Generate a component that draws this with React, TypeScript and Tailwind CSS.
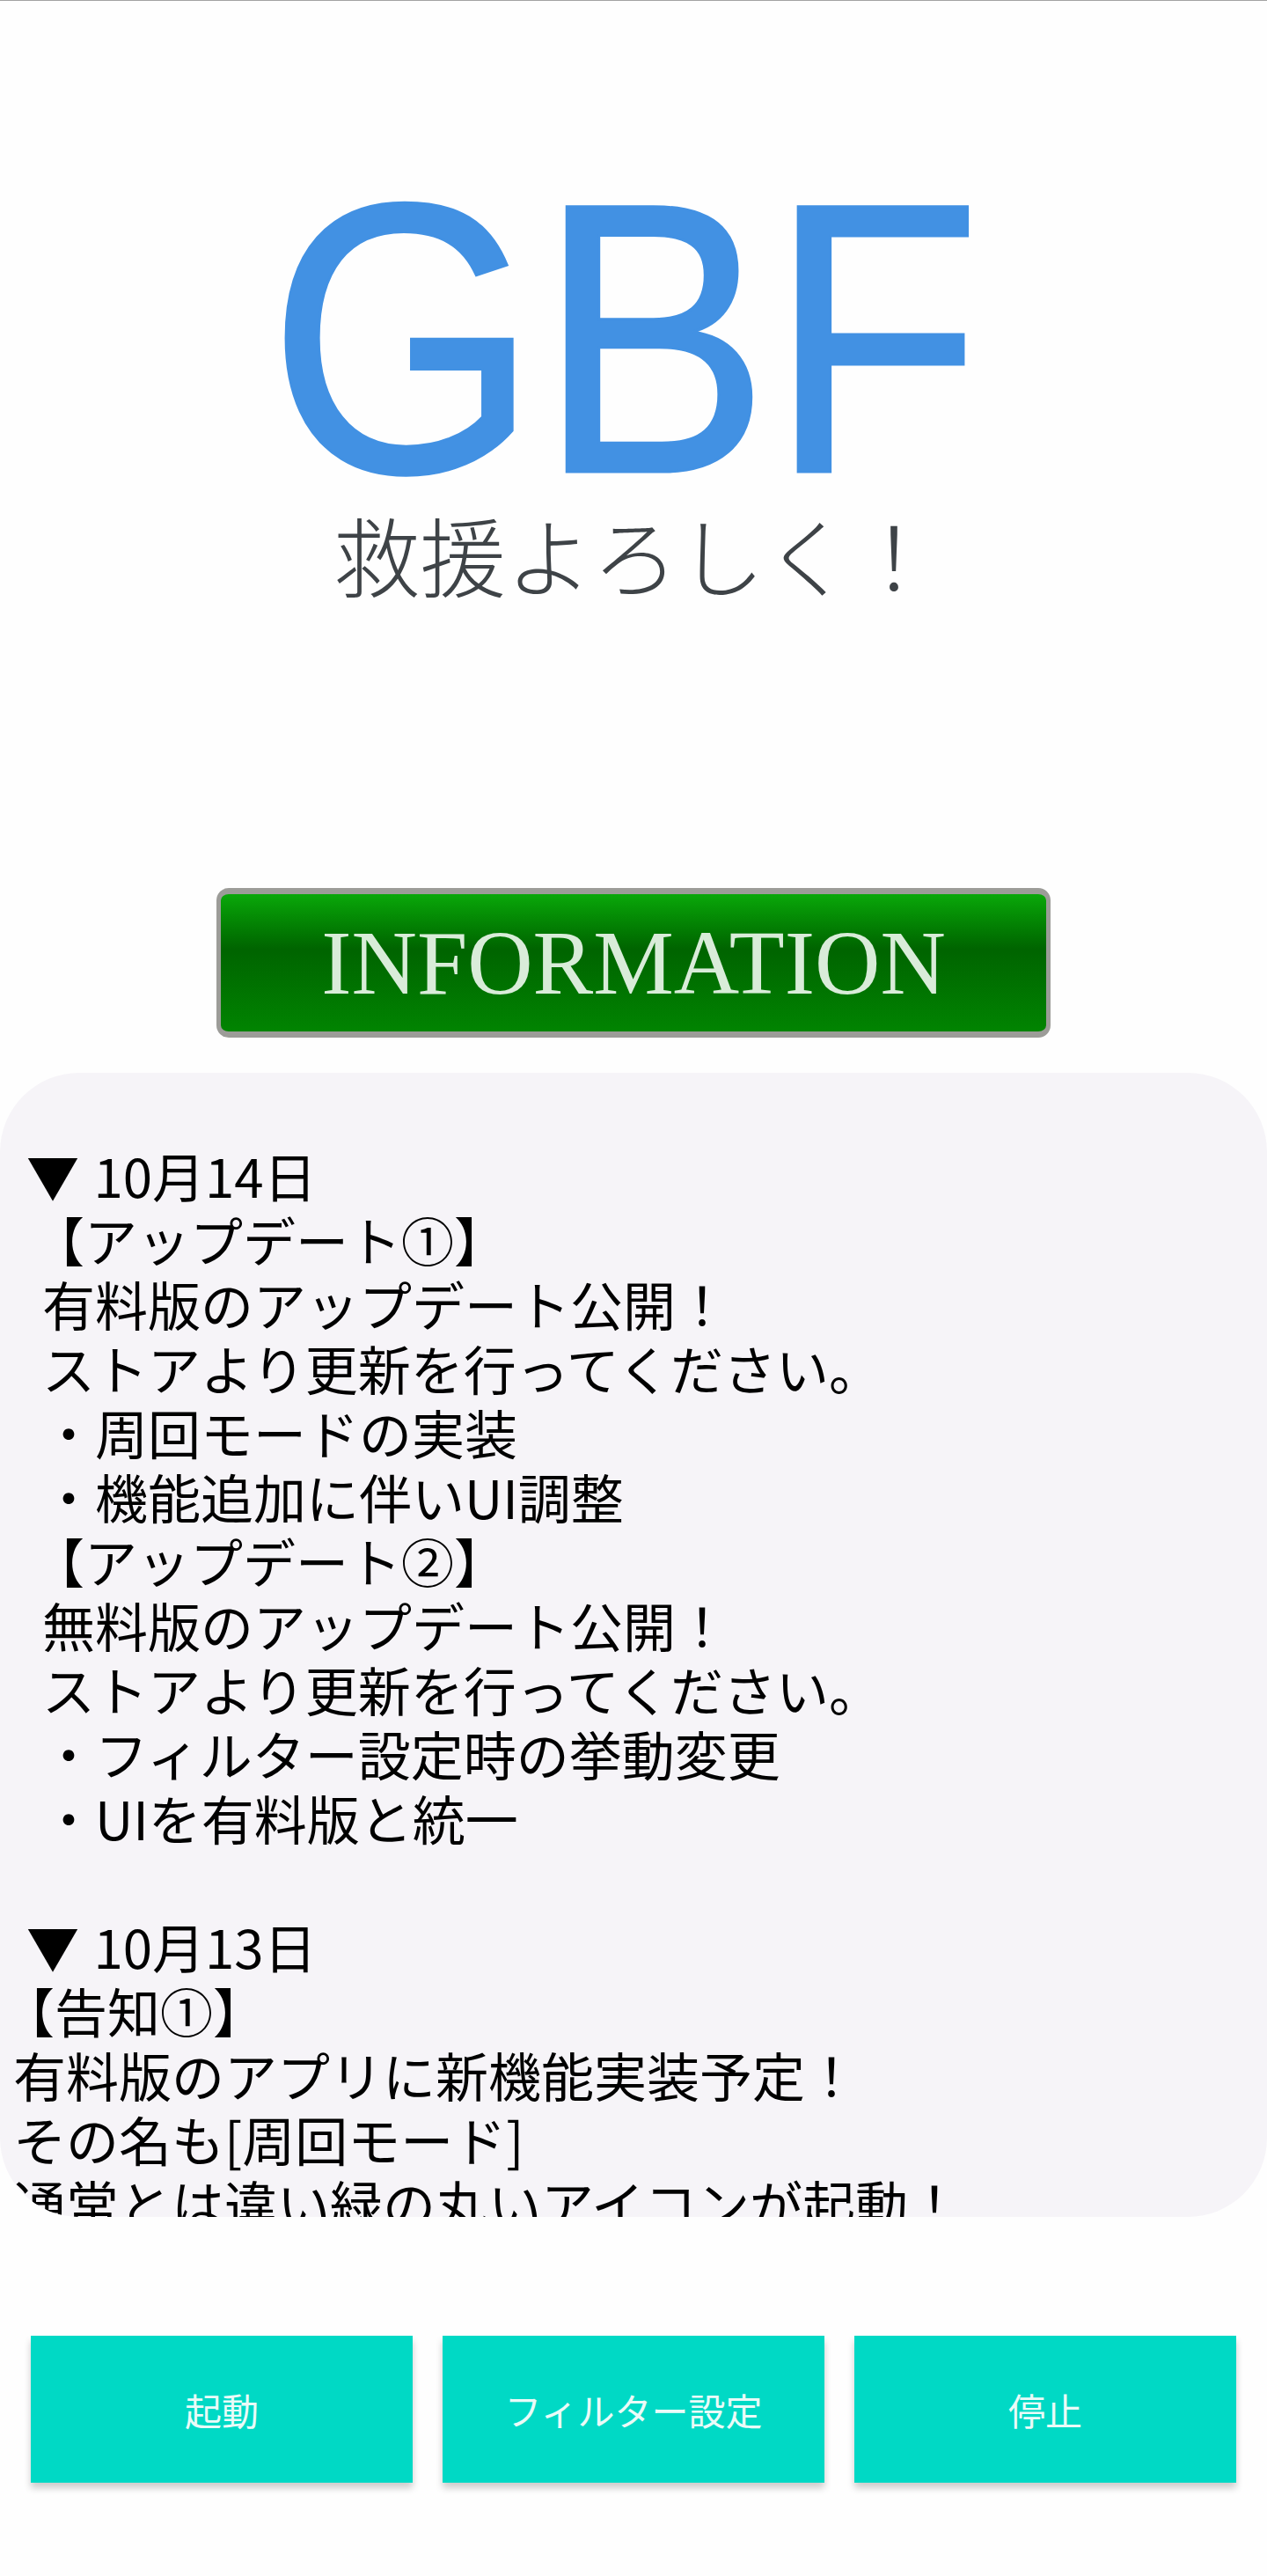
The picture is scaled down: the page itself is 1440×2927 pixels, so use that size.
const cjk = "font-['Noto_Sans_CJK_JP','Noto_Sans',sans-serif]";

const lines: { text: string; indent: string }[] = [
  { text: "▼ 10月14日", indent: "pl-[30px] [word-spacing:3px]" },
  { text: "【アップデート①】", indent: "pl-[36px]" },
  { text: "有料版のアップデート公開！", indent: "pl-[48px]" },
  { text: "ストアより更新を行ってください。", indent: "pl-[48px]" },
  { text: "・周回モードの実装", indent: "pl-[48px]" },
  { text: "・機能追加に伴いUI調整", indent: "pl-[48px]" },
  { text: "【アップデート②】", indent: "pl-[36px]" },
  { text: "無料版のアップデート公開！", indent: "pl-[48px]" },
  { text: "ストアより更新を行ってください。", indent: "pl-[48px]" },
  { text: "・フィルター設定時の挙動変更", indent: "pl-[48px]" },
  { text: "・UIを有料版と統一", indent: "pl-[48px]" },
  { text: "\u00a0", indent: "" },
  { text: "▼ 10月13日", indent: "pl-[30px] [word-spacing:3px]" },
  { text: "【告知①】", indent: "pl-[2px]" },
  { text: "有料版のアプリに新機能実装予定！", indent: "pl-[15px]" },
  { text: "その名も[周回モード]", indent: "pl-[15px]" },
  { text: "通常とは違い緑の丸いアイコンが起動！", indent: "pl-[15px]" },
];

const buttons = ["起動", "フィルター設定", "停止"];

export default function App() {
  return (
    <div className={`w-[1440px] h-[2927px] overflow-hidden bg-[#fefefe] ${cjk}`}>
      <div className="h-px bg-[#a3a3a3]" />

      <div className="h-[1008px] pt-[203px] flex flex-col items-center">
        <div className="pr-[22px] font-['Liberation_Sans',sans-serif] text-[438px] leading-[360px] text-[#4291e3] scale-x-[0.9] [-webkit-text-stroke:3px_#4291e3] blur-[0.5px]">
          GBF
        </div>
        <div className="mt-[7px] pl-[4px] font-light text-[98px] leading-[114px] text-[#3e4347] whitespace-nowrap blur-[0.5px]">
          救援よろしく！
        </div>
      </div>

      <div className="flex justify-center">
        <div className="w-[948px] h-[170px] rounded-[14px] border-x-[5px] border-y-[7px] border-[#9c9c98] bg-gradient-to-b from-[#0aa80a] via-[#006400] via-40% to-[#018401] flex items-center justify-center blur-[0.5px]">
          <span className="font-['Liberation_Serif',serif] text-[103px] leading-none text-[#d9ecd9]">INFORMATION</span>
        </div>
      </div>

      <div className="mt-[40px] h-[1300px] overflow-hidden rounded-[90px] bg-[#f6f4f8] pt-[79px] text-[60px] leading-[73px] text-black whitespace-nowrap">
        {lines.map((line, i) => (
          <div key={i} className={line.indent}>
            {line.text}
          </div>
        ))}
      </div>

      <div className="mt-[135px] px-[35px] grid grid-cols-3 gap-[34px]">
        {buttons.map((label) => (
          <button
            key={label}
            type="button"
            className="h-[167px] bg-[#00d9c5] text-[42px] text-[#eafbf8] shadow-[0_6px_8px_rgba(0,0,0,0.2)]"
          >
            {label}
          </button>
        ))}
      </div>
    </div>
  );
}
